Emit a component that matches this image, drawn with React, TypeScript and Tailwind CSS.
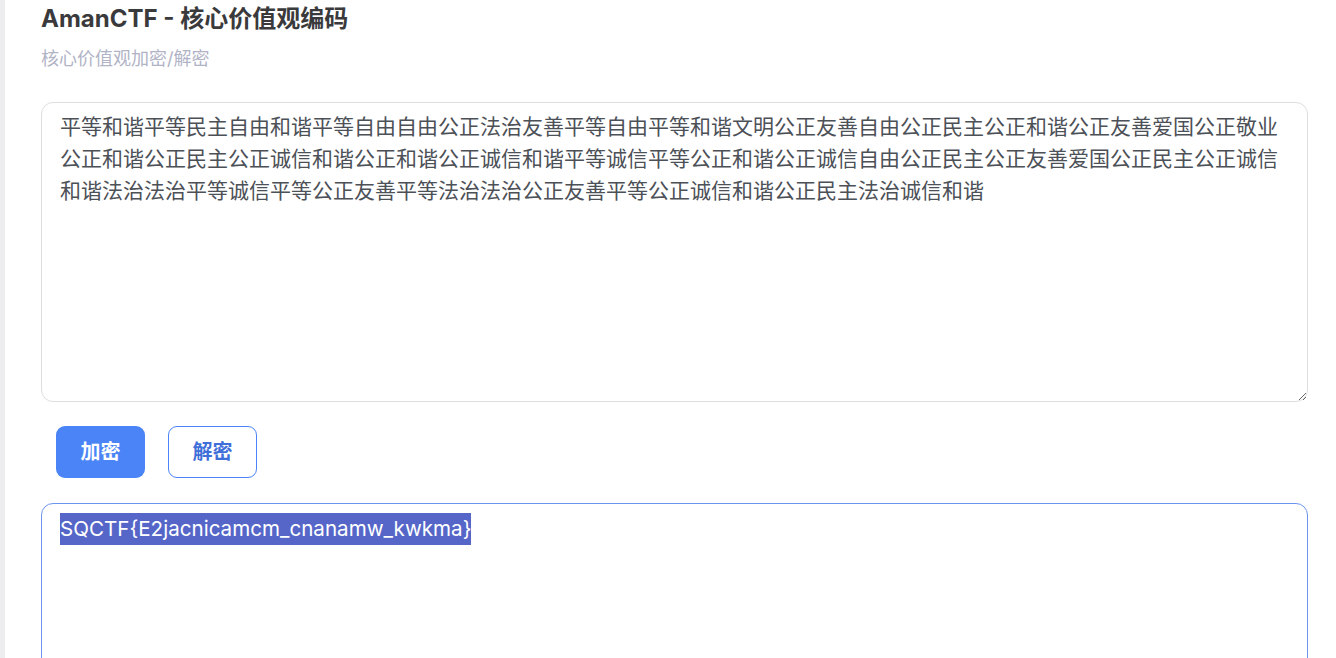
import React from 'react';

const INPUT =
  '平等和谐平等民主自由和谐平等自由自由公正法治友善平等自由平等和谐文明公正友善自由公正民主公正和谐公正友善爱国公正敬业' +
  '公正和谐公正民主公正诚信和谐公正和谐公正诚信和谐平等诚信平等公正和谐公正诚信自由公正民主公正友善爱国公正民主公正诚信' +
  '和谐法治法治平等诚信平等公正友善平等法治法治公正友善平等公正诚信和谐公正民主法治诚信和谐';

const OUTPUT = 'SQCTF{E2jacnicamcm_cnanamw_kwkma}';

const font = { fontFamily: 'Inter, "Noto Sans CJK SC", sans-serif' };

export default function App() {
  return (
    <div className="flex min-h-screen bg-white" style={font}>
      <aside className="w-[5px] shrink-0 bg-[#ededf0]" />
      <main className="flex flex-1 flex-col pl-[36px] pr-[28px]">
        <h1 className="text-[24px] leading-[38px] font-bold text-[#3a3a3c]">AmanCTF - 核心价值观编码</h1>
        <p className="mt-[9px] text-[18px] leading-[24px] text-[#b1b3c6]">核心价值观加密/解密</p>

        <textarea
          readOnly
          defaultValue={INPUT}
          className="mt-[31px] h-[300px] w-full rounded-[12px] border border-[#dedede] px-[18px] py-[8px] text-[21px] leading-[32px] text-[#4c5057] outline-none"
          style={font}
        />

        <div className="mt-[24px] ml-[15px] flex gap-[23px]">
          <button className="h-[52px] w-[89px] rounded-[9px] bg-[#4a84f7] text-[20px] font-bold text-white">
            加密
          </button>
          <button className="h-[52px] w-[89px] rounded-[9px] border border-[#4a84f7] bg-white text-[20px] font-bold text-[#3f6fd8]">
            解密
          </button>
        </div>

        <div className="mt-[25px] h-[300px] w-full shrink-0 rounded-[12px] border border-[#6d95ee] px-[18px] py-[9px] text-[20.6px] leading-[32px] text-white">
          <span className="inline-block bg-[#5566c8] leading-[32px]">{OUTPUT}</span>
        </div>
      </main>
    </div>
  );
}
